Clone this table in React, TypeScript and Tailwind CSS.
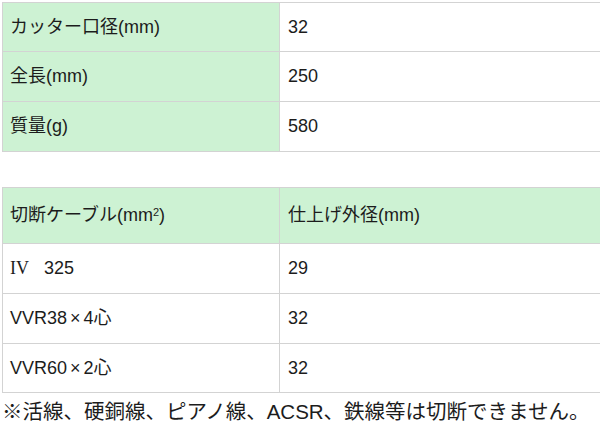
const font = "font-['Liberation_Sans','Noto_Sans_CJK_JP',sans-serif]"

const specs = [
  { label: "カッター口径(mm)", value: "32", h: "h-[49px]" },
  { label: "全長(mm)", value: "250", h: "h-[50px]" },
  { label: "質量(g)", value: "580", h: "h-[50px]" },
]

const cables = [
  { size: "38", cores: "4", value: "32", h: "h-[50px]" },
  { size: "60", cores: "2", value: "32", h: "h-[49px]" },
]

function Cell({ children, green }: { children: React.ReactNode; green?: boolean }) {
  return (
    <td
      className={`border border-[#d3d3d3] align-middle ${
        green ? "bg-[#cdf2d3]" : "bg-white"
      }`}
    >
      {children}
    </td>
  )
}

export default function App() {
  return (
    <div className={`w-[600px] h-[448px] overflow-hidden bg-white text-[#1c1c1c] ${font}`}>
      <table className="ml-[2px] mt-[2px] w-[640px] border-collapse text-[18px] table-fixed">
        <colgroup>
          <col className="w-[277px]" />
          <col />
        </colgroup>
        <tbody>
          {specs.map((r) => (
            <tr key={r.label} className={r.h}>
              <Cell green>
                <span className="pl-[7px]">{r.label}</span>
              </Cell>
              <Cell>
                <span className="pl-[8px]">{r.value}</span>
              </Cell>
            </tr>
          ))}
        </tbody>
      </table>

      <table className="ml-[2px] mt-[35px] w-[640px] border-collapse text-[18px] table-fixed">
        <colgroup>
          <col className="w-[277px]" />
          <col />
        </colgroup>
        <tbody>
          <tr className="h-[56px]">
            <Cell green>
              <span className="pl-[7px]">
                切断ケーブル(mm<sup className="text-[11px]">2</sup>)
              </span>
            </Cell>
            <Cell green>
              <span className="pl-[8px]">仕上げ外径(mm)</span>
            </Cell>
          </tr>
          <tr className="h-[50px]">
            <Cell>
              <span className="pl-[7px] whitespace-pre">
                <span className="font-['Liberation_Serif',serif]">IV</span>
                {"   325"}
              </span>
            </Cell>
            <Cell>
              <span className="pl-[8px]">29</span>
            </Cell>
          </tr>
          {cables.map((r) => (
            <tr key={r.size} className={r.h}>
              <Cell>
                <span className="pl-[7px]">
                  VVR{r.size}
                  <span className="mx-[3px]">×</span>
                  {r.cores}心
                </span>
              </Cell>
              <Cell>
                <span className="pl-[8px]">{r.value}</span>
              </Cell>
            </tr>
          ))}
        </tbody>
      </table>

      <p className="mt-[5px] pl-[2px] text-[20.5px] leading-[28px] whitespace-nowrap">
        ※活線、硬銅線、ピアノ線、ACSR、鉄線等は切断できません。
      </p>
    </div>
  )
}
